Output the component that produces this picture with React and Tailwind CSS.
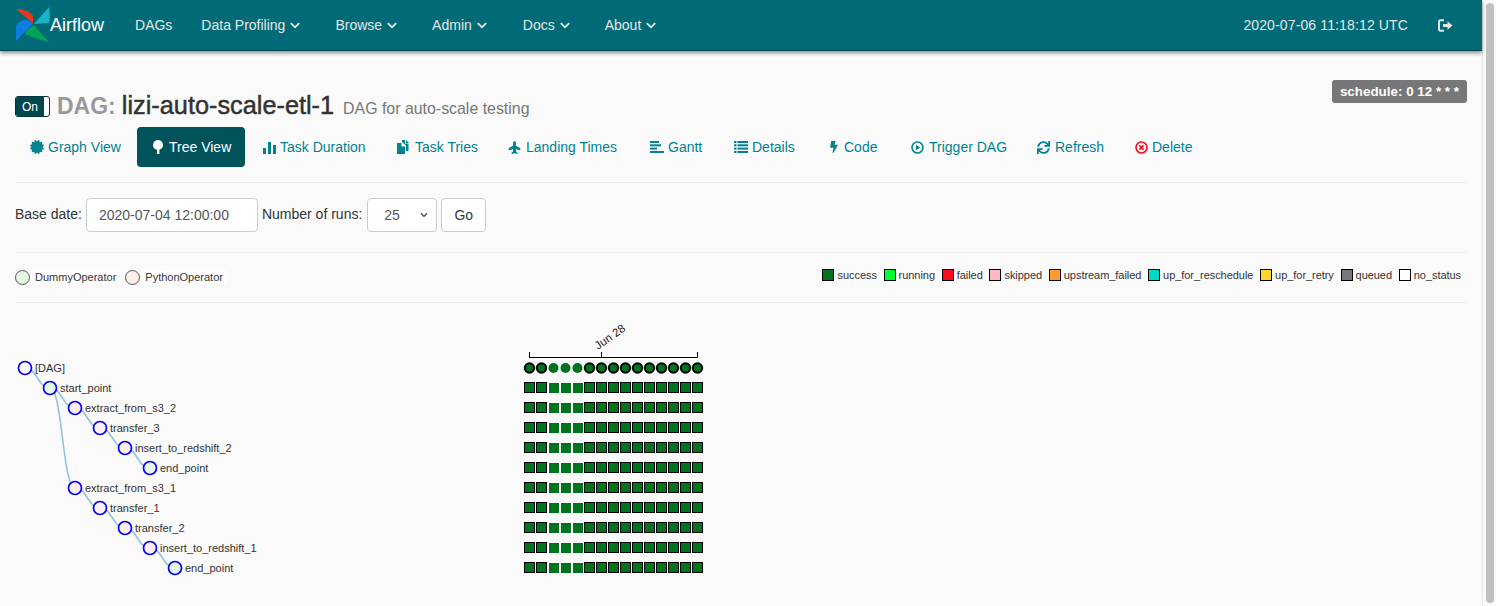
import React from 'react';
import { FaCertificate, FaChevronDown, FaPlane, FaBolt, FaSync } from 'react-icons/fa';

const FONT = { fontFamily: '"Liberation Sans", Arial, sans-serif' };

const Logo = () => (
  <svg width="36" height="37" viewBox="0 0 36 37" className="shrink-0">
    <path d="M1 2 C9 2 16 5 18 9 L18 16.5 Z" fill="#e43921" />
    <path d="M34 0 C35 5 35 12 34 16 L19 17 Z" fill="#17b4c6" />
    <path d="M18.5 18 L34 35 C26 33 16 30 10 27 C11 23 15 20 18.5 18 Z" fill="#04a258" />
    <path d="M1 34 L18 16.5 C12 11 5 12 1 19 Z" fill="#0c7de4" />
  </svg>
);

const Chevron = () => <FaChevronDown className="ml-[5px] mr-[5px] w-[10px] text-[11px] text-[#e6e6e6]" />;

const TreeIcon = () => (
  <svg width="12" height="14" viewBox="0 0 12 14">
    <circle cx="6" cy="5" r="5" fill="currentColor" />
    <rect x="5" y="7" width="2.4" height="7" fill="currentColor" />
  </svg>
);
const StatsIcon = () => (
  <svg width="13" height="13" viewBox="0 0 13 13" fill="currentColor">
    <rect x="0" y="7" width="3" height="6" />
    <rect x="5" y="1" width="3" height="12" />
    <rect x="10" y="4" width="3" height="9" />
  </svg>
);
const DuplicateIcon = () => (
  <svg width="14" height="14" viewBox="0 0 14 14" fill="currentColor">
    <path d="M0 3h4.5v3.5H8V14H0z" />
    <path d="M5 0h3v3.5h3.5V11H9V5.5L5 2z" />
    <path d="M9 0l3 3H9z" />
  </svg>
);
const AlignIcon = () => (
  <svg width="14" height="12" viewBox="0 0 14 12" fill="currentColor">
    <rect x="0" y="0" width="9" height="2" />
    <rect x="0" y="3.3" width="11" height="2" />
    <rect x="0" y="6.6" width="7" height="2" />
    <rect x="0" y="10" width="14" height="2" />
  </svg>
);
const ListIcon = () => (
  <svg width="14" height="12" viewBox="0 0 14 12" fill="currentColor">
    {[0, 3.3, 6.6, 10].map((y) => (
      <g key={y}>
        <rect x="0" y={y} width="2.5" height="2" />
        <rect x="3.5" y={y} width="10.5" height="2" />
      </g>
    ))}
  </svg>
);
const PlayIcon = () => (
  <svg width="13" height="13" viewBox="0 0 13 13">
    <circle cx="6.5" cy="6.5" r="5.5" fill="none" stroke="currentColor" strokeWidth="1.6" />
    <path d="M5 3.8 L9.2 6.5 L5 9.2Z" fill="currentColor" />
  </svg>
);
const RemoveIcon = () => (
  <svg width="13" height="13" viewBox="0 0 13 13">
    <circle cx="6.5" cy="6.5" r="5.5" fill="none" stroke="#ee0f25" strokeWidth="1.6" />
    <path d="M4.4 4.4 L8.6 8.6 M8.6 4.4 L4.4 8.6" stroke="#ee0f25" strokeWidth="1.7" />
  </svg>
);
const LogoutIcon = () => (
  <svg width="15" height="13" viewBox="0 0 15 13">
    <path d="M6 1.2H2.5A1.5 1.5 0 0 0 1 2.7v7.6a1.5 1.5 0 0 0 1.5 1.5H6" fill="none" stroke="#e6e6e6" strokeWidth="2" />
    <path d="M5 5h4.5V2.2L14.5 6.5 9.5 10.8V8H5z" fill="#e6e6e6" />
  </svg>
);

const tabs = [
  { label: 'Graph View', icon: <FaCertificate className="text-[14px]" />, w: 'w-[120px]', o: 'w-[18px]' },
  { label: 'Tree View', icon: <TreeIcon />, w: 'w-[108px] mr-[1px]', o: 'w-[17px]', active: true },
  { label: 'Task Duration', icon: <StatsIcon />, w: 'w-[132px]', o: 'w-[17px]' },
  { label: 'Task Tries', icon: <DuplicateIcon />, w: 'w-[109px]', o: 'w-[18px]' },
  { label: 'Landing Times', icon: <FaPlane className="text-[13px] -rotate-90" />, w: 'w-[140px]', o: 'w-[18px]' },
  { label: 'Gantt', icon: <AlignIcon />, w: 'w-[82px]', o: 'w-[18px]' },
  { label: 'Details', icon: <ListIcon />, w: 'w-[92px]', o: 'w-[18px]' },
  { label: 'Code', icon: <FaBolt className="text-[12px]" />, w: 'w-[81px]', o: 'w-[16px]' },
  { label: 'Trigger DAG', icon: <PlayIcon />, w: 'w-[124px]', o: 'w-[18px]' },
  { label: 'Refresh', icon: <FaSync className="text-[13px]" />, w: 'w-[96px]', o: 'w-[18px]' },
  { label: 'Delete', icon: <RemoveIcon />, w: 'w-[87px]', o: 'w-[17px]' },
];

const states = [
  ['success', 'bg-[#00731e]'],
  ['running', 'bg-[#00ff33]'],
  ['failed', 'bg-[#ff0a20]'],
  ['skipped', 'bg-[#ffb9c6]'],
  ['upstream_failed', 'bg-[#ff9a2e]'],
  ['up_for_reschedule', 'bg-[#00d8c8]'],
  ['up_for_retry', 'bg-[#ffd42e]'],
  ['queued', 'bg-[#787878]'],
  ['no_status', 'bg-white'],
];

const DUMMY = '#e8f7e4';
const PYTHON = '#ffefeb';
const nodes = [
  { name: '[DAG]', d: 0, fill: '#ffffff', parent: null },
  { name: 'start_point', d: 1, fill: DUMMY, parent: 0 },
  { name: 'extract_from_s3_2', d: 2, fill: PYTHON, parent: 1 },
  { name: 'transfer_3', d: 3, fill: PYTHON, parent: 2 },
  { name: 'insert_to_redshift_2', d: 4, fill: PYTHON, parent: 3 },
  { name: 'end_point', d: 5, fill: DUMMY, parent: 4 },
  { name: 'extract_from_s3_1', d: 2, fill: PYTHON, parent: 1 },
  { name: 'transfer_1', d: 3, fill: PYTHON, parent: 6 },
  { name: 'transfer_2', d: 4, fill: PYTHON, parent: 7 },
  { name: 'insert_to_redshift_1', d: 5, fill: PYTHON, parent: 8 },
  { name: 'end_point', d: 6, fill: DUMMY, parent: 9 },
];
const nx = (n) => 25 + 25 * n.d;
const ny = (i) => 48 + 20 * i;

const cols = Array.from({ length: 15 }, (_, i) => i);
const noStroke = (c) => c >= 2 && c <= 4;

// tree + grid share one chart, coordinates start at y=320 of the page
const TreeChart = () => (
  <svg width="1000" height="270" viewBox="0 0 1000 270" className="block" style={FONT}>
    {nodes.map((n, i) => {
      if (n.parent === null) return null;
      const p = nodes[n.parent];
      const x0 = nx(p), y0 = ny(n.parent), x1 = nx(n), y1 = ny(i);
      const mx = (x0 + x1) / 2;
      return (
        <path key={i} d={`M${x0} ${y0} C${mx} ${y0} ${mx} ${y1} ${x1} ${y1}`} fill="none" stroke="#8cc3dd" strokeWidth="1.5" />
      );
    })}
    {nodes.map((n, i) => (
      <g key={i}>
        <circle cx={nx(n)} cy={ny(i)} r="6.5" fill={n.fill} stroke="#0000ff" strokeWidth="1.7" />
        <text x={nx(n) + 10} y={ny(i) + 4} fontSize="11" fill="#333333">{n.name}</text>
      </g>
    ))}

    <path d="M529.5 32V37.5H697.5V32M601.5 32V37.5" fill="none" stroke="#000000" strokeWidth="1" />
    <text x="0" y="0" fontSize="11.5" fill="#222222" transform="translate(598 30) rotate(-35)">Jun 28</text>

    {cols.map((c) => (
      <circle
        key={c}
        cx={529.5 + 12 * c}
        cy={48}
        r={noStroke(c) ? 5 : 4.7}
        fill="#00731e"
        stroke={noStroke(c) ? 'none' : '#000000'}
        strokeWidth="2"
      />
    ))}
    {nodes.slice(1).map((n, r) =>
      cols.map((c) =>
        noStroke(c) ? (
          <rect key={`${r}-${c}`} x={525 + 12 * c} y={63 + 20 * r} width="10" height="10" fill="#00731e" />
        ) : (
          <rect
            key={`${r}-${c}`}
            x={524.5 + 12 * c}
            y={62.5 + 20 * r}
            width="10"
            height="10"
            fill="#00731e"
            stroke="#000000"
            strokeWidth="1"
          />
        )
      )
    )}
  </svg>
);

export default function App() {
  return (
    <div className="flex h-[606px] w-[1496px] overflow-hidden bg-[#fafafa] text-[#333333]" style={FONT}>
      <div className="w-[1482px] shrink-0">
        <nav className="relative flex h-[51px] items-center border-b border-[#00474e] bg-[#006b76] pl-[15px] pr-[29px] text-[14px] text-[#e6e6e6] shadow-[0_2px_4px_rgba(0,0,0,0.45)]">
          <Logo />
          <span className="ml-[-1px] text-[18px] text-white">Airflow</span>
          <span className="ml-[31px]">DAGs</span>
          <span className="ml-[29px] flex items-center">Data Profiling<Chevron /></span>
          <span className="ml-[30px] flex items-center">Browse<Chevron /></span>
          <span className="ml-[30px] flex items-center">Admin<Chevron /></span>
          <span className="ml-[31px] flex items-center">Docs<Chevron /></span>
          <span className="ml-[30px] flex items-center">About<Chevron /></span>
          <span className="ml-auto tracking-[0.13px]">2020-07-06 11:18:12 UTC</span>
          <span className="ml-[30px]"><LogoutIcon /></span>
        </nav>

        <div className="px-[15px]">
          <div className="relative flex h-[76px] items-start">
            <div className="mt-[45px] flex h-[21px] w-[35px] items-center rounded-[3px] border border-[#00343a] bg-white">
              <span className="flex h-full w-[28px] items-center justify-center rounded-l-[2px] bg-[#00474e] text-[12px] text-white">On</span>
            </div>
            <h4 className="ml-[7px] mt-[39px] text-[25.3px] leading-[31px]">
              <span className="text-[23px] font-bold text-[#999999]">DAG:</span>{' '}
              <span className="ml-[-1px] text-[#333333] [-webkit-text-stroke:0.5px_#333333]">lizi-auto-scale-etl-1</span>
              <span className="ml-[9px] text-[15.9px] font-normal text-[#777777]">DAG for auto-scale testing</span>
            </h4>
            <span className="absolute right-0 top-[29px] h-[23px] rounded-[3px] bg-[#777777] px-[8px] py-[4px] text-[13.4px] leading-[15px] font-bold text-white">schedule: 0 12 * * *</span>
          </div>

          <div className="flex h-[41px] gap-[2px] text-[14px] text-[#00838f]">
            {tabs.map((t) => (
              <div
                key={t.label}
                className={`flex h-[40px] shrink-0 items-center rounded-[4px] pl-[15px] ${t.w} ${t.active ? 'bg-[#00535b] text-white' : ''}`}
              >
                <span className={`flex shrink-0 items-center ${t.o}`}>{t.icon}</span>
                <span>{t.label}</span>
              </div>
            ))}
          </div>

          <div className="mt-[14px] h-px bg-[#eeeeee]" />

          <div className="mt-[15px] flex h-[34px] items-center text-[14px]">
            <span className="pb-[1px]">Base date:</span>
            <div className="ml-[4px] flex h-[34px] w-[172px] items-center rounded-[4px] border border-[#cccccc] bg-white pl-[12px] text-[#555555]">2020-07-04 12:00:00</div>
            <span className="ml-[4px] pb-[1px]">Number of runs:</span>
            <div className="ml-[5px] flex h-[34px] w-[70px] items-center justify-between rounded-[4px] border border-[#cccccc] bg-white pl-[16px] pr-[8px] text-[#555555]">
              <span>25</span>
              <FaChevronDown className="text-[8px] text-[#444444]" />
            </div>
            <div className="ml-[4px] flex h-[34px] w-[45px] items-center justify-center rounded-[4px] border border-[#cccccc] bg-white">Go</div>
          </div>

          <div className="mt-[20px] h-px bg-[#eeeeee]" />

          <div className="flex h-[49px] items-center justify-between">
            <div className="flex items-center text-[11px]">
              <span className="h-[15px] w-[15px] rounded-full border border-[#555555] bg-[#e8f7e4]" />
              <span className="ml-px mb-[1px] rounded-[3px] bg-white px-[4px] py-px leading-[12px]">DummyOperator</span>
              <span className="ml-[5px] h-[15px] w-[15px] rounded-full border border-[#555555] bg-[#ffefeb]" />
              <span className="ml-px mb-[1px] rounded-[3px] bg-white px-[4px] py-px leading-[12px]">PythonOperator</span>
            </div>
            <div className="mb-[5px] mr-[6px] flex items-center text-[11px] text-[#333333]">
              {states.map(([name, color], i) => (
                <div key={name} className={`flex items-center ${i > 0 ? 'ml-[6.75px]' : ''}`}>
                  <span className={`mr-[3px] h-[12px] w-[12px] border border-black ${color}`} />
                  <span className="tracking-[-0.05px]">{name}</span>
                </div>
              ))}
            </div>
          </div>

          <div className="h-px bg-[#eeeeee]" />
        </div>

        <div className="mt-[17px]"><TreeChart /></div>
      </div>

      <div className="flex w-[14px] justify-center border-l border-[#e8e8e8] bg-[#fafafa] pt-[3px]">
        <div className="h-[600px] w-[8px] rounded-[4px] bg-[#c1c1c1]" />
      </div>
    </div>
  );
}
